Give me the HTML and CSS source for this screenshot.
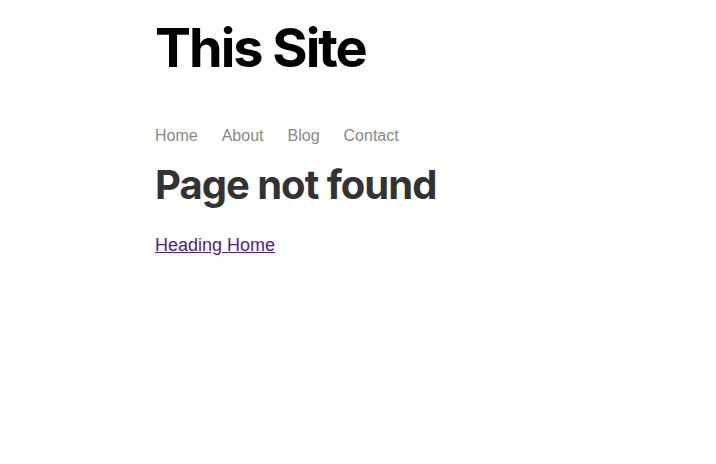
FILE: index.html
```html
<!DOCTYPE html>
<html lang="en">
<head>
<meta charset="utf-8">
<title>Page not found</title>
<link rel="stylesheet" href="styles.css">
</head>
<body>
<div class="wrap">
  <header class="site-header">
    <h1 class="site-title">This Site</h1>
    <nav class="nav">
      <a href="#">Home</a>
      <a href="#">About</a>
      <a href="#">Blog</a>
      <a href="#">Contact</a>
    </nav>
  </header>
  <main>
    <h2 class="page-title">Page not found</h2>
    <p class="back"><a href="#">Heading Home</a></p>
  </main>
</div>
</body>
</html>
```
FILE: styles.css
```css
html, body {
  margin: 0;
  padding: 0;
  background: #fff;
}
body {
  font-family: "Liberation Sans", Arial, sans-serif;
}
.wrap {
  width: 406px;
  margin: 0 auto;
}
.site-title {
  font-family: Inter, "Liberation Sans", sans-serif;
  font-weight: 700;
  font-size: 54px;
  line-height: 66px;
  margin: 15px 0 0;
  color: #000;
  letter-spacing: -2px;
}
.nav {
  display: flex;
  gap: 24px;
  margin-top: 45px;
  font-size: 16px;
  line-height: 20px;
}
.nav a {
  color: #888;
  text-decoration: none;
}
.page-title {
  font-family: Inter, "Liberation Sans", sans-serif;
  font-weight: 700;
  font-size: 40px;
  line-height: 48px;
  color: #333;
  letter-spacing: -1px;
  margin: 15px 0 0;
}
.back {
  font-size: 18px;
  margin: 26px 0 0;
}
.back a {
  color: #551a8b;
}
```
